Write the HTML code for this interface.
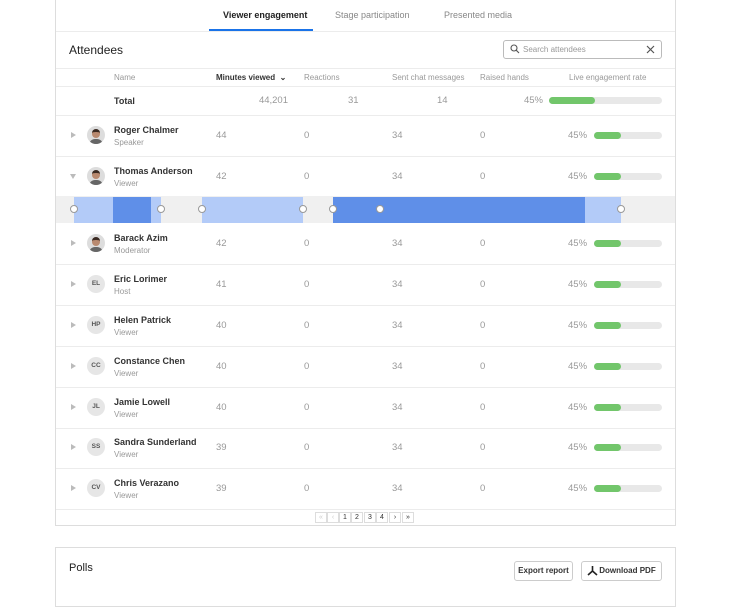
<!DOCTYPE html><html><head><style>
*{box-sizing:border-box;margin:0;padding:0}
body{width:729px;height:590px;background:#fff;font-family:"Liberation Sans",sans-serif;position:relative;overflow:hidden;color:#222}
.a{position:absolute;white-space:nowrap}
.card{position:absolute;border:1px solid #ddd;background:#fff}
.g{color:#999;font-size:9.5px}
.h{font-size:8px;color:#999}
.n{font-size:9px;font-weight:bold;color:#333}
.s{font-size:8px;color:#999}
.bar{position:absolute;height:7px;border-radius:4px;background:#e8e8e8}
.bar i{position:absolute;left:0;top:0;bottom:0;border-radius:4px;background:#72c66b}
.line{position:absolute;left:56px;width:619px;height:1px;background:#ececec}
.av{position:absolute;width:18px;height:18px;border-radius:50%;background:#e6e6e6;font-size:6.5px;font-weight:bold;color:#555;text-align:center;line-height:18px}
.tri{position:absolute;width:0;height:0;border-top:3px solid transparent;border-bottom:3px solid transparent;border-left:5px solid #bbb}
.seg{position:absolute;top:197px;height:26px}
.dot{position:absolute;top:205px;width:8px;height:8px;border-radius:50%;background:#fff;border:1px solid #999}
.pg{position:absolute;top:512px;width:12px;height:11px;border:1px solid #ddd;font-size:7px;text-align:center;line-height:10px;color:#333}
.btn{position:absolute;border:1px solid #ccc;border-radius:3px;font-size:8px;font-weight:bold;color:#333;text-align:center}
</style></head><body>
<div class="card" style="left:55px;top:-2px;width:621px;height:528px"></div>
<div class="a" style="left:223px;top:10px;font-size:9px;font-weight:bold;color:#222">Viewer engagement</div>
<div class="a" style="left:335px;top:10px;font-size:9px;color:#888">Stage participation</div>
<div class="a" style="left:444px;top:10px;font-size:9px;color:#888">Presented media</div>
<div class="a" style="left:209px;top:29px;width:104px;height:2px;background:#1a73e8"></div>
<div class="line" style="top:31px"></div>
<div class="a" style="left:69px;top:43px;font-size:12px;color:#222">Attendees</div>
<div class="a" style="left:503px;top:40px;width:159px;height:19px;border:1px solid #bbb;border-radius:3px"></div>
<svg class="a" style="left:510px;top:44px" width="10" height="10" viewBox="0 0 10 10"><circle cx="4" cy="4" r="3" fill="none" stroke="#555" stroke-width="1.1"/><path d="M6.2 6.2L9 9" stroke="#555" stroke-width="1.1"/></svg>
<div class="a" style="left:523px;top:45px;font-size:8px;color:#999">Search attendees</div>
<svg class="a" style="left:646px;top:45px" width="9" height="9"><path d="M1 1L8 8M8 1L1 8" stroke="#555" stroke-width="1.2"/></svg>
<div class="line" style="top:68px"></div>
<div class="a h" style="left:114px;top:73px">Name</div>
<div class="a" style="left:216px;top:73px;font-size:8px;font-weight:bold;color:#333">Minutes viewed &nbsp;⌄</div>
<div class="a h" style="left:304px;top:73px">Reactions</div>
<div class="a h" style="left:392px;top:73px">Sent chat messages</div>
<div class="a h" style="left:480px;top:73px">Raised hands</div>
<div class="a h" style="left:569px;top:73px">Live engagement rate</div>
<div class="line" style="top:86px"></div>
<div class="a n" style="left:114px;top:96px">Total</div>
<div class="a g" style="left:250px;top:95px;width:38px;text-align:right">44,201</div>
<div class="a g" style="left:348px;top:95px">31</div>
<div class="a g" style="left:437px;top:95px">14</div>
<div class="a g" style="left:518px;top:95px;width:25px;text-align:right">45%</div>
<div class="bar" style="left:549px;top:97px;width:113px"><i style="width:46px"></i></div>
<div class="line" style="top:115px"></div>
<div class="a" style="left:56px;top:196px;width:619px;height:27px;background:#f0f0f0"></div>
<div class="seg" style="left:74px;width:87px;background:#b3cbf8"></div>
<div class="seg" style="left:113px;width:38px;background:#5f8fe8"></div>
<div class="seg" style="left:202px;width:101px;background:#b3cbf8"></div>
<div class="seg" style="left:585px;width:36px;background:#b3cbf8"></div>
<div class="seg" style="left:333px;width:252px;background:#5f8fe8"></div>
<div class="dot" style="left:70px"></div><div class="dot" style="left:157px"></div><div class="dot" style="left:198px"></div><div class="dot" style="left:299px"></div><div class="dot" style="left:329px"></div><div class="dot" style="left:376px"></div><div class="dot" style="left:617px"></div>
<div id="rows"></div>
<div class="line" style="top:509px"></div>
<div class="pg" style="left:315px;color:#ccc">«</div><div class="pg" style="left:327px;color:#ccc">‹</div><div class="pg" style="left:339px">1</div><div class="pg" style="left:351px">2</div><div class="pg" style="left:364px">3</div><div class="pg" style="left:376px">4</div><div class="pg" style="left:389px">›</div><div class="pg" style="left:402px">»</div>
<div class="card" style="left:55px;top:547px;width:621px;height:60px"></div>
<div class="a" style="left:69px;top:562px;font-size:11px;color:#222">Polls</div>
<div class="btn" style="left:514px;top:561px;width:59px;height:20px;line-height:18px">Export report</div>
<div class="btn" style="left:581px;top:561px;width:81px;height:20px;line-height:18px;padding-left:12px">Download PDF</div>
<svg class="a" style="left:587px;top:565px" width="11" height="11"><path d="M5.5 1V6M5.5 6L1 10M5.5 6L10 10" stroke="#222" stroke-width="1.6" fill="none"/></svg>
<script>
var R=[["Roger Chalmer","Speaker",135,44,"p"],["Thomas Anderson","Viewer",176,42,"p"],["Barack Azim","Moderator",243,42,"p"],["Eric Lorimer","Host",284,41,"EL"],["Helen Patrick","Viewer",325,40,"HP"],["Constance Chen","Viewer",366,40,"CC"],["Jamie Lowell","Viewer",407,40,"JL"],["Sandra Sunderland","Viewer",447,39,"SS"],["Chris Verazano","Viewer",488,39,"CV"]];
var h="";R.forEach(function(r,i){var y=r[2];
h+=(i==1?'<div class="a" style="left:70px;top:'+(y-2)+'px;border-left:3px solid transparent;border-right:3px solid transparent;border-top:5px solid #bbb"></div>':'<div class="tri" style="left:71px;top:'+(y-3)+'px"></div>');
h+=r[4]=="p"?'<div class="av" style="left:87px;top:'+(y-9)+'px;background:#ddd;overflow:hidden"><div style="position:absolute;left:5px;top:3px;width:8px;height:9px;border-radius:4px;background:#b98a70;border-top:3px solid #3a2a22"></div><div style="position:absolute;left:2px;top:13px;width:14px;height:8px;border-radius:6px 6px 0 0;background:#666"></div></div>':'<div class="av" style="left:87px;top:'+(y-9)+'px">'+r[4]+'</div>';
h+='<div class="a n" style="left:114px;top:'+(y-10)+'px">'+r[0]+'</div><div class="a s" style="left:114px;top:'+(y+3)+'px">'+r[1]+'</div>';
h+='<div class="a g" style="left:216px;top:'+(y-5)+'px">'+r[3]+'</div><div class="a g" style="left:304px;top:'+(y-5)+'px">0</div><div class="a g" style="left:392px;top:'+(y-5)+'px">34</div><div class="a g" style="left:480px;top:'+(y-5)+'px">0</div><div class="a g" style="left:568px;top:'+(y-5)+'px">45%</div>';
h+='<div class="bar" style="left:594px;top:'+(y-3)+'px;width:68px"><i style="width:27px"></i></div>';
if(i!=1&&i!=8)h+='<div class="line" style="top:'+(y+21)+'px"></div>';});
document.getElementById("rows").innerHTML=h;
</script>
</body></html>
